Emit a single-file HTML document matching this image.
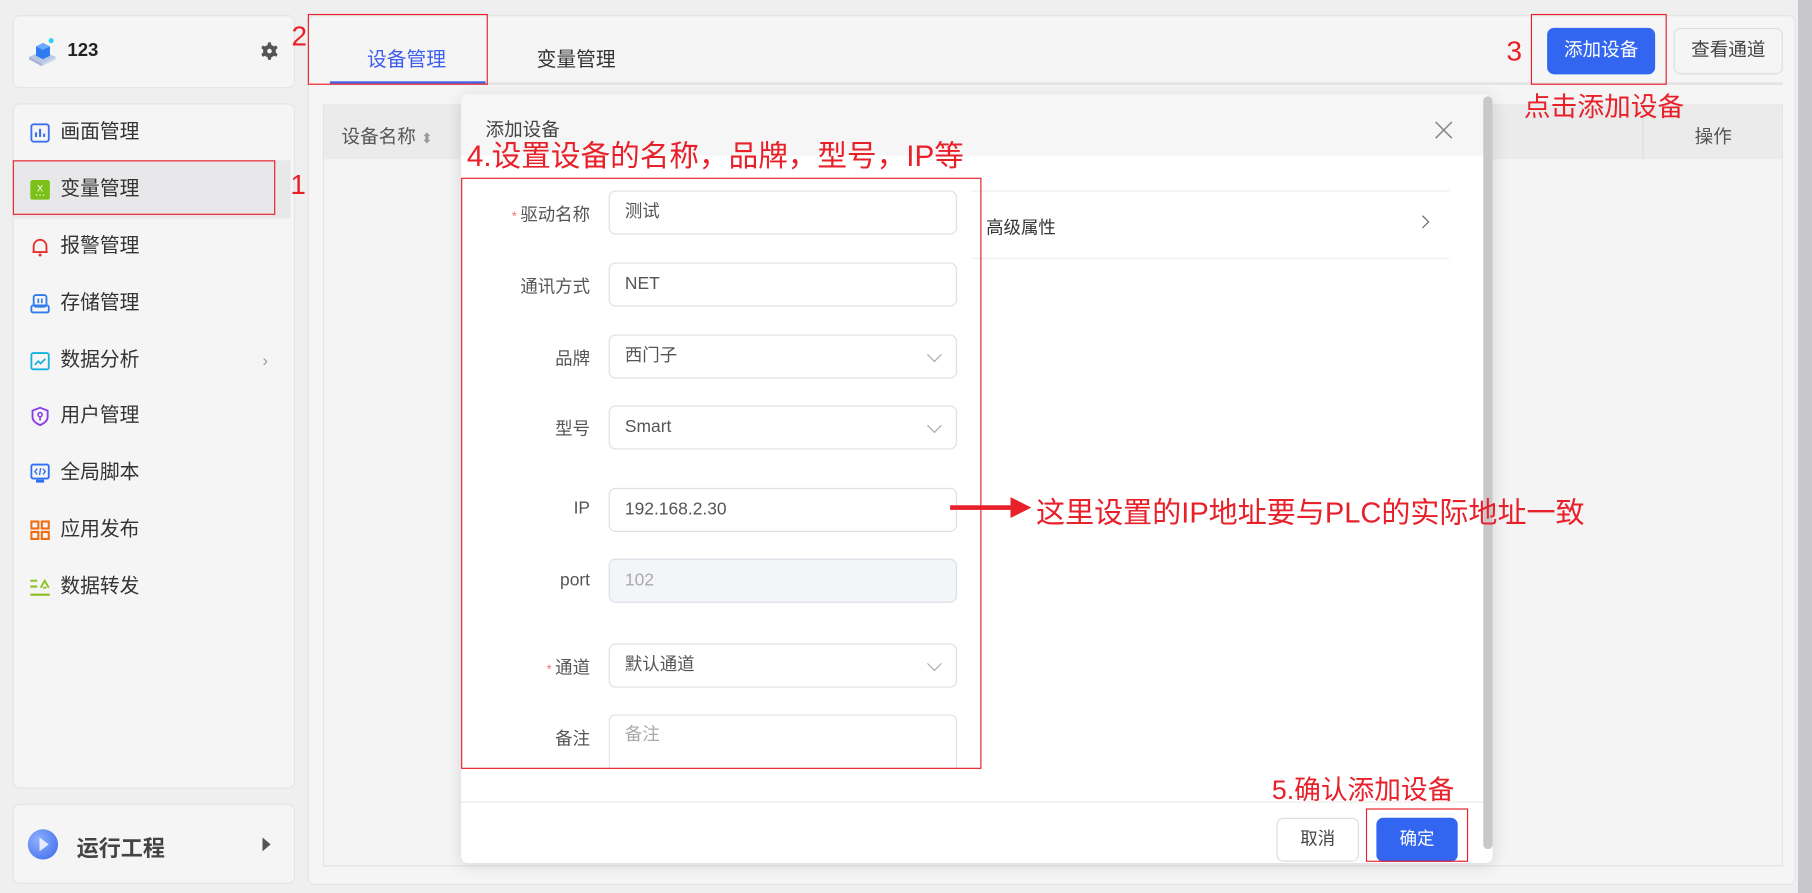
<!DOCTYPE html>
<html><head><meta charset="utf-8"><style>
*{box-sizing:border-box;margin:0;padding:0}
html,body{width:1812px;height:893px;overflow:hidden;background:#efefef}
#s{position:absolute;left:0;top:0;width:1560px;height:769px;transform:scale(1.1615);transform-origin:0 0;font-family:"Liberation Sans","Noto Sans CJK SC",sans-serif;color:#333}
.a{position:absolute}
.card{position:absolute;background:#f5f5f5;border:1px solid #e4e4e4;border-radius:6px}
.mi{position:absolute;left:11px;width:239px;height:48px;font-size:17px;color:#333;line-height:48px;padding-left:41px}
.mi svg{position:absolute;left:15px;top:16px}
.red{color:#e8202a}
.rb{position:absolute;border:1.5px solid #e8202a}
.lb{position:absolute;width:110px;text-align:right;left:0;font-size:15px;color:#555}
.in{position:absolute;left:524px;width:300px;height:38px;border:1px solid #dcdfe6;border-radius:6px;background:#fff;font-size:15px;color:#555;line-height:36px;padding-left:13px}
.chev{position:absolute;right:14px;top:12px;width:9px;height:9px;border-right:1px solid #aaa;border-bottom:1px solid #aaa;transform:rotate(45deg)}
</style></head><body><div id="s">
<!-- left top -->
<div class="card" style="left:11px;top:13px;width:243px;height:63px"></div>
<svg class="a" style="left:23px;top:30px" width="28" height="28" viewBox="0 0 28 28"><path d="M2 19 L13 14 L25 19 L13 25Z" fill="#b8c7e6"/><path d="M2 19 L13 25 L13 27 L2 21Z" fill="#9fb0d4"/><path d="M25 19 L13 25 L13 27 L25 21Z" fill="#c9d4ee"/><path d="M8 10 L14 7 L20 10 L20 18 L14 21 L8 18Z" fill="#2f7cf0"/><path d="M8 10 L14 13 L20 10 L14 7Z" fill="#6aa8ff"/><circle cx="21" cy="5" r="2.2" fill="#30d0f0"/></svg>
<div class="a" style="left:58px;top:35px;font-size:16px;font-weight:bold;color:#222">123</div>
<svg class="a" style="left:224px;top:36px" width="16" height="16" viewBox="0 0 16 16"><g fill="#555"><rect x="6.5" y="0.5" width="3" height="15" rx="1"/><rect x="6.5" y="0.5" width="3" height="15" rx="1" transform="rotate(60 8 8)"/><rect x="6.5" y="0.5" width="3" height="15" rx="1" transform="rotate(120 8 8)"/><circle cx="8" cy="8" r="5.5"/></g><circle cx="8" cy="8" r="2" fill="#f5f5f5"/></svg>
<!-- menu -->
<div class="card" style="left:11px;top:89px;width:243px;height:590px"></div>
<div class="a" style="left:11px;top:138px;width:239px;height:50px;background:#e8e8ea"></div>
<div class="mi" style="top:90px"><svg width="17" height="17"><rect x="1" y="1" width="15" height="15" rx="2" fill="none" stroke="#3b6ff0" stroke-width="1.6"/><path d="M5 12V8M8.5 12V5M12 12V9" stroke="#3b6ff0" stroke-width="1.8"/></svg>画面管理</div>
<div class="mi" style="top:139px"><svg width="17" height="17"><rect x="0" y="0" width="17" height="17" rx="2" fill="#7cc01a"/><text x="8.5" y="10" font-size="8" fill="#fff" text-anchor="middle" font-family="Liberation Sans">X</text><path d="M5 13h1M8 13h1M11 13h1" stroke="#fff"/></svg>变量管理</div>
<div class="mi" style="top:188px"><svg width="17" height="17"><path d="M3 13V8a5.5 5.5 0 0 1 11 0v5H2h13" fill="none" stroke="#e83030" stroke-width="1.6"/><circle cx="8.5" cy="15.5" r="1.3" fill="#e83030"/></svg>报警管理</div>
<div class="mi" style="top:237px"><svg width="17" height="17"><rect x="3" y="1" width="11" height="10" rx="2" fill="none" stroke="#2f7cf0" stroke-width="1.6"/><rect x="1" y="10" width="15" height="6" rx="1.5" fill="none" stroke="#2f7cf0" stroke-width="1.6"/><path d="M7 4v4M10 4v4" stroke="#2f7cf0" stroke-width="1.4"/></svg>存储管理</div>
<div class="mi" style="top:286px"><svg width="17" height="17"><rect x="1" y="2" width="15" height="14" rx="1.5" fill="none" stroke="#19b0e0" stroke-width="1.6"/><path d="M4 12l3-3 2 2 4-4" fill="none" stroke="#19b0e0" stroke-width="1.5"/></svg>数据分析<span style="position:absolute;left:215px;color:#999;font-size:14px">›</span></div>
<div class="mi" style="top:334px"><svg width="17" height="17"><path d="M8.5 1L15 3.5V9c0 3-3 5.5-6.5 7C5 14.5 2 12 2 9V3.5Z" fill="none" stroke="#8a3de8" stroke-width="1.6"/><circle cx="8.5" cy="7" r="1.8" fill="none" stroke="#8a3de8" stroke-width="1.3"/><path d="M8.5 9v3" stroke="#8a3de8" stroke-width="1.4"/></svg>用户管理</div>
<div class="mi" style="top:383px"><svg width="17" height="17"><rect x="1" y="1" width="15" height="12" rx="1.5" fill="none" stroke="#2f6ff0" stroke-width="1.6"/><path d="M6 4.5L4 7l2 2.5M11 4.5L13 7l-2 2.5M9 4l-1 6" fill="none" stroke="#2f6ff0" stroke-width="1.2"/><rect x="5" y="14" width="7" height="2.5" fill="#2f6ff0"/></svg>全局脚本</div>
<div class="mi" style="top:432px"><svg width="17" height="17"><g fill="none" stroke="#f06a10" stroke-width="1.8"><rect x="1" y="1" width="6" height="6"/><rect x="10" y="1" width="6" height="6"/><rect x="1" y="10" width="6" height="6"/><rect x="10" y="10" width="6" height="6"/></g></svg>应用发布</div>
<div class="mi" style="top:481px"><svg width="17" height="17"><path d="M0 3h6M0 8h6M0 15h17" stroke="#8ac020" stroke-width="1.8"/><path d="M9 9l3.5-6 3.5 6M11 9h3" fill="none" stroke="#8ac020" stroke-width="1.6"/></svg>数据转发</div>
<!-- bottom -->
<div class="card" style="left:11px;top:692px;width:243px;height:69px"></div>
<div class="a" style="left:24px;top:714px;width:26px;height:26px;border-radius:50%;background:radial-gradient(circle at 35% 35%,#8fb0ff,#3a66e8)"></div>
<div class="a" style="left:34px;top:721px;border-left:8px solid #fff;border-top:6px solid transparent;border-bottom:6px solid transparent;opacity:.8"></div>
<div class="a" style="left:66px;top:716px;font-size:19px;font-weight:bold;color:#444">运行工程</div>
<div class="a" style="left:226px;top:721px;border-left:7px solid #555;border-top:6px solid transparent;border-bottom:6px solid transparent"></div>
<!-- main -->
<div class="card" style="left:265px;top:13px;width:1281px;height:749px"></div>
<div class="a" style="left:284px;top:71px;width:1251px;height:2px;background:#e2e2e2"></div>
<div class="a" style="left:284px;top:70px;width:134px;height:2px;background:#4060e8"></div>
<div class="a" style="left:316px;top:37px;font-size:17px;color:#3d5ef0">设备管理</div>
<div class="a" style="left:462px;top:37px;font-size:17px;color:#333">变量管理</div>
<div class="a" style="left:1332px;top:24px;width:93px;height:40px;background:#3366f0;border-radius:6px;color:#fff;font-size:16px;text-align:center;line-height:40px">添加设备</div>
<div class="a" style="left:1441px;top:24px;width:94px;height:40px;border:1px solid #ddd;border-radius:6px;color:#444;font-size:16px;text-align:center;line-height:38px">查看通道</div>
<div class="a" style="left:278px;top:90px;width:1257px;height:656px;border:1px solid #e2e2e2;background:#f4f4f4"></div>
<div class="a" style="left:279px;top:91px;width:1255px;height:46px;background:#ebebeb"></div>
<div class="a" style="left:1414px;top:91px;width:1px;height:46px;background:#ddd"></div>
<div class="a" style="left:294px;top:104px;font-size:16px;color:#555">设备名称 <span style="color:#999;font-size:12px">⬍</span></div>
<div class="a" style="left:1459px;top:104px;font-size:16px;color:#555">操作</div>
<div class="a" style="left:1548px;top:0;width:12px;height:769px;background:#c8c8cc"></div>
<!-- dialog -->
<div class="a" style="left:397px;top:81px;width:888px;height:662px;background:#fff;border-radius:6px;box-shadow:0 2px 14px rgba(0,0,0,.12);overflow:hidden">
 <div class="a" style="left:0;top:0;width:888px;height:53px;background:#f6f6f6"></div>
 <div class="a" style="left:21px;top:17px;font-size:16px;color:#444">添加设备</div>
 <svg class="a" style="left:838px;top:23px" width="16" height="16"><path d="M1 1L15 15M15 1L1 15" stroke="#888" stroke-width="1.3"/></svg>
 <div class="a" style="left:880px;top:2px;width:8px;height:648px;background:#c8c8cc;border-radius:4px"></div>
 <div class="a" style="left:0;top:609px;width:880px;height:1px;background:#eaeaea"></div>
 <div class="a" style="left:439px;top:83px;width:412px;height:1px;background:#eee"></div>
 <div class="a" style="left:439px;top:141px;width:412px;height:1px;background:#eee"></div>
 <div class="a" style="left:452px;top:104px;font-size:15px;color:#333">高级属性</div>
 <div class="a" style="left:824px;top:106px;width:8px;height:8px;border-right:1px solid #666;border-top:1px solid #666;transform:rotate(45deg)"></div>
 <div class="a" style="left:702px;top:623px;width:71px;height:38px;border:1px solid #ddd;border-radius:6px;font-size:15px;text-align:center;line-height:36px;color:#444">取消</div>
 <div class="a" style="left:788px;top:623px;width:70px;height:38px;background:#3366f0;border-radius:6px;font-size:15px;text-align:center;line-height:38px;color:#fff">确定</div>
</div>
<!-- form -->
<div class="lb" style="left:398px;top:174px"><span style="color:#f56c6c;font-size:11px">* </span>驱动名称</div>
<div class="in" style="top:164px">测试</div>
<div class="lb" style="left:398px;top:236px">通讯方式</div>
<div class="in" style="top:226px">NET</div>
<div class="lb" style="left:398px;top:298px">品牌</div>
<div class="in" style="top:288px">西门子<span class="chev"></span></div>
<div class="lb" style="left:398px;top:358px">型号</div>
<div class="in" style="top:349px">Smart<span class="chev"></span></div>
<div class="lb" style="left:398px;top:429px">IP</div>
<div class="in" style="top:420px">192.168.2.30</div>
<div class="lb" style="left:398px;top:491px">port</div>
<div class="in" style="top:481px;background:#f4f5f8;color:#aaa">102</div>
<div class="lb" style="left:398px;top:564px"><span style="color:#f56c6c;font-size:11px">* </span>通道</div>
<div class="in" style="top:554px">默认通道<span class="chev"></span></div>
<div class="lb" style="left:398px;top:625px">备注</div>
<div class="in" style="top:615px;height:46px;border-bottom:none;border-radius:6px 6px 0 0;color:#aaa;line-height:34px">备注</div>
<!-- annotations -->
<div class="rb" style="left:11px;top:138px;width:226px;height:47px"></div>
<div class="a red" style="left:250px;top:146px;font-size:24px">1</div>
<div class="rb" style="left:265px;top:12px;width:155px;height:61px"></div>
<div class="a red" style="left:251px;top:18px;font-size:24px">2</div>
<div class="rb" style="left:1318px;top:12px;width:117px;height:61px"></div>
<div class="a red" style="left:1297px;top:31px;font-size:24px">3</div>
<div class="a red" style="left:1312px;top:73px;font-size:23px;white-space:nowrap">点击添加设备</div>
<div class="a red" style="left:402px;top:114px;font-size:25.5px;white-space:nowrap">4.设置设备的名称，品牌，型号，IP等</div>
<div class="rb" style="left:397px;top:153px;width:448px;height:509px"></div>
<div class="a" style="left:818px;top:435px;width:55px;height:4px;background:#e8202a"></div>
<div class="a" style="left:870px;top:428px;border-left:18px solid #e8202a;border-top:9px solid transparent;border-bottom:9px solid transparent"></div>
<div class="a red" style="left:892px;top:422px;font-size:25px;white-space:nowrap">这里设置的IP地址要与PLC的实际地址一致</div>
<div class="a red" style="left:1095px;top:661px;font-size:23px;white-space:nowrap">5.确认添加设备</div>
<div class="rb" style="left:1176px;top:696px;width:88px;height:46px"></div>
</div></body></html>
